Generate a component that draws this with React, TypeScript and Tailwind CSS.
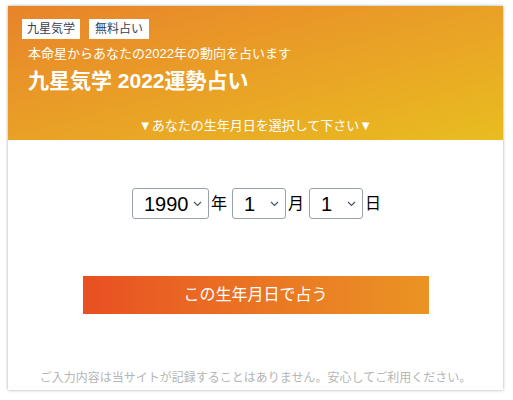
import { useState } from 'react';

function Chevron() {
  return (
    <svg width="9" height="6" viewBox="0 0 9 6" className="text-gray-600">
      <path d="M1 1l3.5 3.5L8 1" fill="none" stroke="currentColor" strokeWidth="1.2" />
    </svg>
  );
}

function FakeSelect({ value, width }: { value: string; width: string }) {
  return (
    <div
      className={`flex items-center justify-between h-[31px] ${width} border border-gray-400 rounded-[3px] bg-white pl-[11px] pr-[6px] text-[20px] leading-none text-black`}
    >
      <span>{value}</span>
      <Chevron />
    </div>
  );
}

export default function App() {
  const [year] = useState('1990');
  return (
    <div
      className="w-[513px] h-[400px] bg-white pt-[6px] px-[8px]"
      style={{ fontFamily: '"Liberation Sans", "Noto Sans CJK JP", sans-serif' }}
    >
      <div className="w-[495px] h-[384px] bg-white shadow-[0_0_3px_rgba(0,0,0,0.35)] flex flex-col">
        {/* header */}
        <div className="h-[134px] bg-gradient-to-br from-[#e8832a] to-[#e8bd1f] px-[14px] pt-[13px] flex flex-col text-white">
          <div className="flex gap-[9px]">
            <span className="bg-white text-gray-700 text-[12px] h-[20px] px-[5px] flex items-center">九星気学</span>
            <span className="bg-white text-gray-700 text-[12px] h-[20px] px-[6px] flex items-center">無料占い</span>
          </div>
          <p className="mt-[6px] ml-[6px] text-[13px] leading-[18px]">本命星からあなたの2022年の動向を占います</p>
          <h1 className="mt-[5px] ml-[6px] text-[21px] font-bold leading-[26px]">九星気学 2022運勢占い</h1>
          <p className="mt-auto mb-[5px] text-center text-[13px] leading-[18px]">▼あなたの生年月日を選択して下さい▼</p>
        </div>

        {/* body */}
        <div className="flex-1 flex flex-col items-center">
          <div className="mt-[48px] ml-[2px] flex items-center gap-[2px] text-[16px] text-black">
            <FakeSelect value={year} width="w-[77px]" />
            <span className="mr-[3px]">年</span>
            <FakeSelect value="1" width="w-[54px]" />
            <span className="mr-[3px]">月</span>
            <FakeSelect value="1" width="w-[54px]" />
            <span>日</span>
          </div>
          <button className="mt-[57px] w-[346px] h-[38px] bg-gradient-to-r from-[#e84f22] to-[#ea9424] text-white text-[16px]">
            この生年月日で占う
          </button>
          <p className="mt-auto mb-[3px] text-[12px] text-[#b5b5b5]">ご入力内容は当サイトが記録することはありません。安心してご利用ください。</p>
        </div>
      </div>
    </div>
  );
}
